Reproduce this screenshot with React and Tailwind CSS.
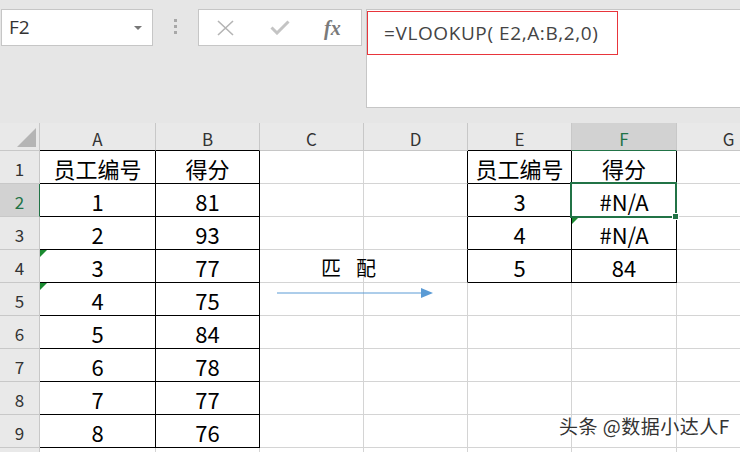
import React from 'react'

const CJK = '"Noto Sans CJK SC", "Noto Sans", sans-serif'

const colHeads = [
  { key: 'A', w: 'w-[116px]' },
  { key: 'B', w: 'w-[104px]' },
  { key: 'C', w: 'w-[104px]' },
  { key: 'D', w: 'w-[104px]' },
  { key: 'E', w: 'w-[104px]' },
  { key: 'F', w: 'w-[105px]' },
  { key: 'G', w: 'w-[104px]' },
]

const rows = [
  ['员工编号', '得分', '', '', '员工编号', '得分', ''],
  ['1', '81', '', '', '3', '#N/A', ''],
  ['2', '93', '', '', '4', '#N/A', ''],
  ['3', '77', '', '', '5', '84', ''],
  ['4', '75', '', '', '', '', ''],
  ['5', '84', '', '', '', '', ''],
  ['6', '78', '', '', '', '', ''],
  ['7', '77', '', '', '', '', ''],
  ['8', '76', '', '', '', '', ''],
  ['', '', '', '', '', '', ''],
]

// green error markers in the top-left corner of a cell
const flagged = { '4-0': true, '5-0': true, '3-5': true }

function inTable(r, c) {
  if ((c === 0 || c === 1) && r >= 1 && r <= 9) return true
  if ((c === 4 || c === 5) && r >= 1 && r <= 4) return true
  return false
}

function Cell({ r, c, text }) {
  const col = colHeads[c]
  const table = inTable(r, c)
  // the right edge of D is the left edge of the E:F table
  const blackRight = table || (c === 3 && r >= 1 && r <= 4)
  const right = blackRight ? 'border-r-black' : 'border-r-[#d4d4d4]'
  const bottom = table ? 'border-b-black' : 'border-b-[#d4d4d4]'
  return (
    <div
      className={`relative flex shrink-0 items-center justify-center border-r border-b text-[22px] leading-none text-black ${col.w} ${right} ${bottom}`}
    >
      {flagged[`${r}-${c}`] && (
        <span className="absolute top-0 left-0 h-0 w-0 border-t-[7px] border-r-[7px] border-t-[#1a8a30] border-r-transparent" />
      )}
      <span className="pt-[2px]">{text}</span>
    </div>
  )
}

function HeaderCell({ c }) {
  const col = colHeads[c]
  const active = col.key === 'F'
  const underTable = col.key === 'A' || col.key === 'B' || col.key === 'E'
  let cls = 'border-b-[#c6c6c6] bg-[#e9e9e9] text-[#333]'
  if (active) cls = 'border-b-[#217346] bg-[#d2d2d2] text-[#217346]'
  else if (underTable) cls = 'border-b-black bg-[#e9e9e9] text-[#333]'
  return (
    <div
      className={`flex shrink-0 items-center justify-center border-r border-b border-r-[#c8c8c8] pt-[3px] text-[17px] leading-none ${col.w} ${cls}`}
    >
      {col.key}
    </div>
  )
}

function RowHead({ n, label }) {
  const active = n === 2
  return (
    <div
      className={`flex w-[40px] shrink-0 items-center justify-center border-r border-b border-b-[#c8c8c8] pt-[2px] text-[17px] leading-none ${
        active ? 'border-r-[#217346] bg-[#d2d2d2] text-[#217346]' : 'border-r-[#c8c8c8] bg-[#e9e9e9] text-[#333]'
      }`}
    >
      {label}
    </div>
  )
}

function Toolbar() {
  return (
    <div className="flex h-[123px] items-start bg-[#e6e6e6] pt-[9px] pl-[1px]">
      <div className="flex h-[37px] w-[152px] items-center justify-between border border-[#c6c6c6] bg-white pr-[10px] pl-[7px]">
        <span className="text-[19px] leading-none text-[#333]" style={{ fontFamily: '"Open Sans", sans-serif' }}>
          F2
        </span>
        <span className="h-0 w-0 border-x-[4px] border-t-[4px] border-x-transparent border-t-[#777]" />
      </div>
      <div className="flex w-[45px] flex-col items-center gap-[3px] pt-[10px]">
        <span className="h-[3px] w-[3px] bg-[#a8a8a8]" />
        <span className="h-[3px] w-[3px] bg-[#a8a8a8]" />
        <span className="h-[3px] w-[3px] bg-[#a8a8a8]" />
      </div>
      <div className="flex h-[37px] w-[164px] items-center border border-[#c6c6c6] bg-white">
        <svg className="ml-[17px]" width="19" height="16" viewBox="0 0 19 16">
          <path d="M2 1 L17 15 M17 1 L2 15" stroke="#b4b4b4" strokeWidth="1.6" fill="none" />
        </svg>
        <svg className="ml-[35px]" width="20" height="15" viewBox="0 0 20 15">
          <path d="M1.5 7.5 L7 13 L18.5 1.5" stroke="#c4c4c4" strokeWidth="3" fill="none" />
        </svg>
        <span
          className="ml-[34px] text-[20px] leading-none font-bold text-[#7a7a7a] italic"
          style={{ fontFamily: '"Liberation Serif", serif' }}
        >
          fx
        </span>
      </div>
      <div className="ml-[4px] h-[99px] flex-1 border border-r-0 border-[#c6c6c6] bg-white">
        <div className="mt-[1px] flex h-[44px] w-[251px] items-center border border-[#e8353b] pl-[16px]">
          <span
            className="text-[19px] leading-none tracking-[0.6px] text-[#444]"
            style={{ fontFamily: '"Open Sans", sans-serif' }}
          >
            =VLOOKUP( E2,A:B,2,0)
          </span>
        </div>
      </div>
    </div>
  )
}

export default function App() {
  return (
    <div className="relative h-[452px] w-[740px] overflow-hidden bg-white" style={{ fontFamily: CJK }}>
      <Toolbar />
      <div className="flex h-[28px]">
        <div className="relative w-[40px] shrink-0 border-r border-b border-[#c8c8c8] bg-[#e9e9e9]">
          <svg className="absolute right-[3px] bottom-[3px]" width="19" height="19" viewBox="0 0 19 19">
            <polygon points="19,0 19,19 0,19" fill="#b5b5b5" />
          </svg>
        </div>
        {colHeads.map((col, c) => (
          <HeaderCell key={col.key} c={c} />
        ))}
      </div>
      {rows.map((row, i) => (
        <div key={i} className="flex h-[33px]">
          {/* row 10 is only a sliver at the bottom edge, its number is hidden */}
          <RowHead n={i + 1} label={i < 9 ? i + 1 : ''} />
          {row.map((text, c) => (
            <Cell key={c} r={i + 1} c={c} text={text} />
          ))}
        </div>
      ))}

      {/* active cell F2 */}
      <div className="absolute top-[182px] left-[570px] h-[36px] w-[107px] border-2 border-[#217346]" />
      <div className="absolute top-[213px] left-[672px] h-[7px] w-[7px] border border-white bg-[#217346]" />

      {/* drawn arrow */}
      <div className="absolute top-[258px] left-[321px] text-[20px] leading-none tracking-[2px] text-black">
        匹&nbsp;&nbsp;配
      </div>
      <svg className="absolute top-[287px] left-[276px]" width="160" height="12" viewBox="0 0 160 12">
        <line x1="1" y1="6" x2="148" y2="6" stroke="#5b9bd5" strokeWidth="1" />
        <polygon points="145,1 157,6 145,11" fill="#5b9bd5" />
      </svg>

      {/* watermark */}
      <div
        className="absolute top-[416px] left-[559px] text-[19px] leading-none tracking-[0.5px] text-[#333]"
        style={{ textShadow: '0 0 2px #fff, 0 0 2px #fff, 0 0 3px #fff' }}
      >
        头条 @数据小达人F
      </div>
    </div>
  )
}
